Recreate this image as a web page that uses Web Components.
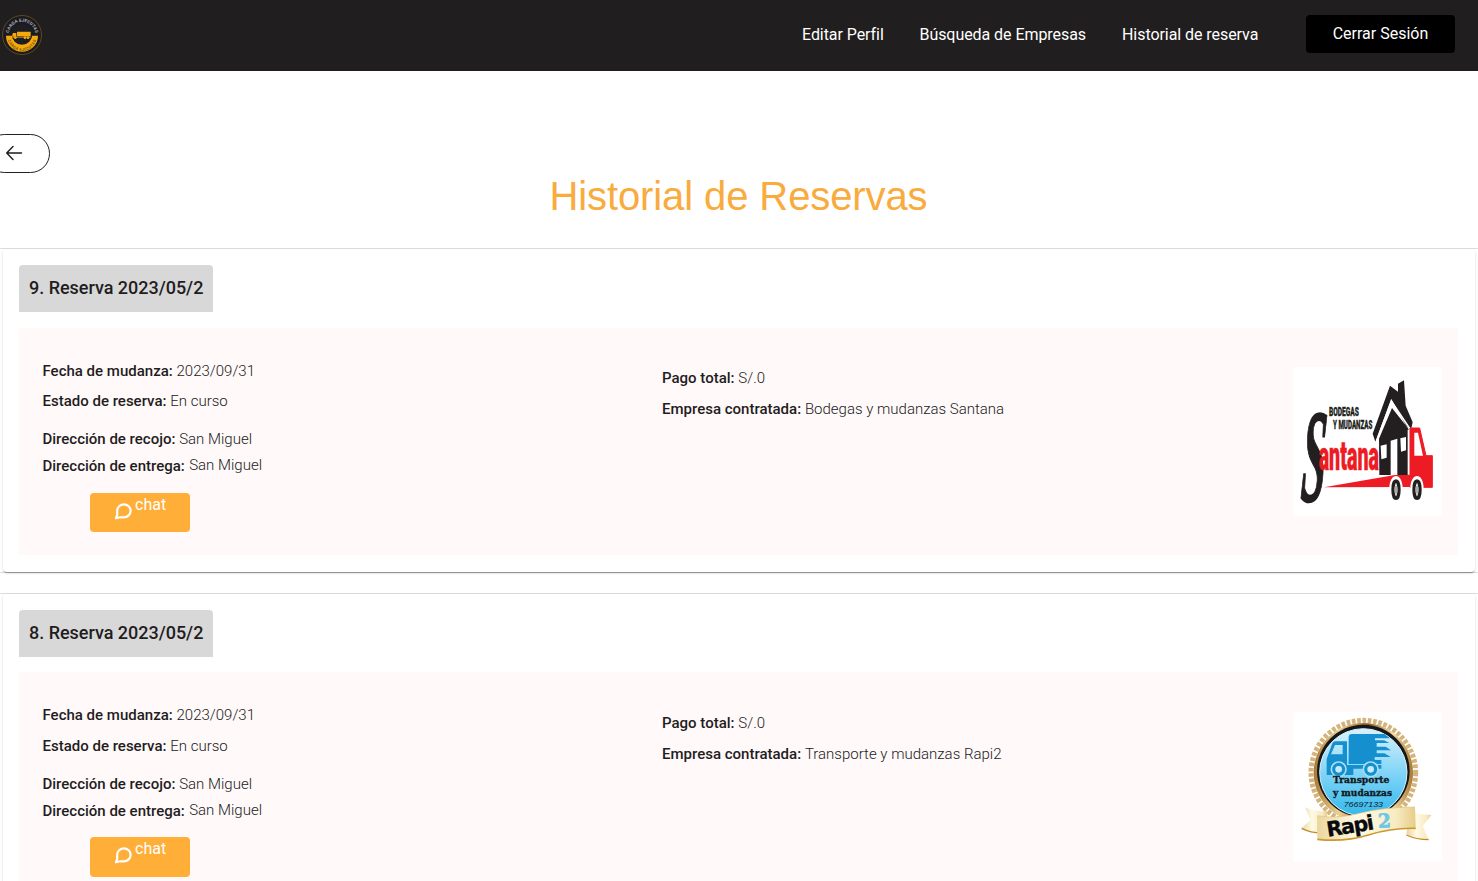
<!DOCTYPE html>
<html lang="es">
<head>
<meta charset="utf-8">
<title>Historial de Reservas</title>
<style>
html,body{margin:0;height:881px;overflow:hidden;background:#fff;font-family:Roboto,sans-serif;color:#212121}
</style>
</head>
<body>
<reservas-page></reservas-page>
<script>
function define(name, html){
  customElements.define(name, class extends HTMLElement{
    constructor(){super();this.attachShadow({mode:'open'}).innerHTML=html;}
  });
}

define('brand-logo', `
<style>:host{display:block;width:40px;height:40px}svg{display:block}</style>
<svg width="40" height="40" viewBox="0 0 120 120">
  <defs><path id="t" d="M20 60a40 40 0 0 1 80 0"/><path id="b" d="M16 64a44 44 0 0 0 88 0"/></defs>
  <circle cx="60" cy="60" r="58.5" fill="#1b1b20" stroke="#80601d" stroke-width="2"/>
  <path d="M12 62a48 48 0 0 0 96 0z" fill="#f6a90c"/>
  <circle cx="60" cy="58" r="31" fill="#1c1d25"/>
  <path d="M45 50h41v14H45zM33 54h10v11H31v-7z" fill="#f6a90c"/><path d="M31 65h55v3H31z" fill="#d9940c"/>
  <circle cx="40" cy="68" r="4" fill="#f6a90c"/><circle cx="69" cy="68" r="4" fill="#f6a90c"/><circle cx="78" cy="68" r="4" fill="#f6a90c"/>
  <text font-family="Roboto" font-weight="700" font-size="13" fill="#b4b4be"><textPath href="#t" startOffset="6" textLength="114">CARGA EJECUTAS</textPath></text>
  <text font-family="Roboto" font-weight="700" font-size="12" fill="#7a570c"><textPath href="#b" startOffset="12" textLength="114">CARGA EJECUTAS</textPath></text>
</svg>`);

define('nav-link', `
<style>:host{display:block;font-size:16px;line-height:20px;letter-spacing:-.06px;color:#fff;white-space:nowrap;width:var(--w)}</style><slot></slot>`);

define('top-bar', `
<style>
:host{display:flex;box-sizing:border-box;height:71px;background:#201e1e;align-items:flex-start;padding:15px 23px 0 2px}
nav{display:flex;gap:36px;margin-left:auto;padding-top:10px}
button{font:400 16px/20px Roboto,sans-serif;color:#fff;background:#000;border:0;border-radius:4px;width:149px;height:38px;margin-left:47px;padding:0 0 1px}
</style>
<brand-logo></brand-logo>
<nav><nav-link style="--w:81.5px">Editar Perfil</nav-link><nav-link style="--w:166.5px">Búsqueda de Empresas</nav-link><nav-link style="--w:137px">Historial de reserva</nav-link></nav>
<button>Cerrar Sesión</button>`);

define('back-button', `
<style>:host{display:block;height:39px;overflow:hidden}
button{display:flex;align-items:center;box-sizing:border-box;width:65px;height:39px;margin-left:-15px;border:1px solid #212121;border-radius:20px;background:#fff;padding:0 0 2px 19px}
svg{display:block}</style>
<button aria-label="Volver"><svg width="18" height="16" viewBox="0 0 18 16" fill="none" stroke="#1c1c1c" stroke-width="1.4" stroke-linecap="round" stroke-linejoin="round"><path d="M16.5 8H1.7M8 1.6L1.7 8L8 14.4"/></svg></button>`);

define('data-field', `
<style>
:host{display:flex;gap:3.8px;height:20px;font-size:15px;line-height:20px;white-space:nowrap}
b{font-weight:500;color:#1f1d1e}span{font-weight:300;color:#212121;margin:var(--shift,0)}
</style>
<b><slot name="label"></slot></b><span><slot></slot></span>`);

define('chat-button', `
<style>:host{display:block}
button{display:flex;align-items:flex-start;box-sizing:border-box;width:100px;height:var(--h,39px);border:0;border-radius:4px;background:#ffae38;color:#fff;padding:2px 0 0 24px;font:400 16px/20px Roboto,sans-serif}
svg{display:block;margin:7px 3px 0 0}</style>
<button><svg width="18" height="18" viewBox="0 0 18 18" fill="none" stroke="#fff" stroke-width="2.2" stroke-linejoin="round"><path d="M2 16.3L3.2 12.6V8.8A6.7 6.5 0 1 1 9.9 15.3H6.2z"/></svg><slot></slot></button>`);

define('santana-logo', `
<style>:host{display:block;width:150px;height:150px}svg{display:block;overflow:visible}</style>
<svg width="150" height="150" viewBox="22 22 450 450">
  <rect x="24" y="22" width="448" height="448" fill="#fff"/>
  <path d="M118 383L335 345H378V382z" fill="#ed1c24"/>
  <path d="M283 237L322 145L372 208V346H284z" fill="#231f20"/>
  <path d="M264 222L316 78L340 96V72L358 62L363 138L384 188L379 210L364 198L320 118L272 246z" fill="#231f20"/>
  <path d="M275 246L320 124L376 208" fill="none" stroke="#fff" stroke-width="5"/>
  <path d="M288 258L306 254V294L290 299zM318 243L338 237V346H318zM347 236L364 232V272L349 276z" fill="#fff"/>
  <path d="M376 205H405L424 288H443V383H376z" fill="#ed1c24" stroke="#ed1c24" stroke-width="3"/>
  <path d="M389 219H400L415 288H389z" fill="#fff"/><path d="M371 210V345" stroke="#fff" stroke-width="4"/>
  <path d="M314 388c0-52 40-52 40 0M377 388c0-52 40-52 40 0" fill="#fff"/>
  <g fill="#fff" stroke="#231f20" stroke-width="10"><ellipse cx="334" cy="390" rx="9" ry="26"/><ellipse cx="397" cy="390" rx="9" ry="26"/></g>
  <ellipse cx="334" cy="390" rx="5" ry="12" fill="#aaa"/><ellipse cx="397" cy="390" rx="5" ry="12" fill="#aaa"/>
  <text transform="translate(46 424) skewX(-3) scale(.33 1)" font-family="Liberation Serif" font-style="italic" font-weight="700" font-size="398" fill="#231f20" stroke="#231f20" stroke-width="6">S</text>
  <g font-family="Roboto" font-weight="900" fill="#231f20" stroke="#231f20" stroke-width="1">
    <text x="133" y="168" font-size="40" textLength="90" lengthAdjust="spacingAndGlyphs">BODEGAS</text>
    <text x="145" y="209" font-size="41" textLength="118" lengthAdjust="spacingAndGlyphs">Y MUDANZAS</text>
  </g>
  <text x="102" y="332" font-family="Roboto" font-weight="900" font-size="124" fill="#ed1c24" stroke="#ed1c24" stroke-width="1.5" textLength="181" lengthAdjust="spacingAndGlyphs">antana</text>
</svg>`);

define('rapi-logo', `
<style>:host{display:block;width:150px;height:150px}svg{display:block}</style>
<svg width="150" height="150" viewBox="22 22 450 450">
  <defs>
    <linearGradient id="sky" x2="0" y2="1"><stop stop-color="#d8f2fd"/><stop offset=".45" stop-color="#8bd8f8"/><stop offset="1" stop-color="#32b8ed"/></linearGradient>
    <linearGradient id="gold"><stop stop-color="#a97833"/><stop offset=".25" stop-color="#ecd190"/><stop offset=".55" stop-color="#8f5c20"/><stop offset=".8" stop-color="#f2d99b"/><stop offset="1" stop-color="#a97833"/></linearGradient>
    <linearGradient id="rib"><stop stop-color="#ead59c"/><stop offset=".4" stop-color="#fffae4"/><stop offset=".8" stop-color="#f7ebc3"/><stop offset="1" stop-color="#e7cd86"/></linearGradient>
  </defs>
  <rect x="24" y="22" width="448" height="448" fill="#fff"/>
  <circle cx="236" cy="204" r="157" fill="none" stroke="#d3b47c" stroke-width="15" stroke-dasharray="11 5"/>
  <circle cx="236" cy="204" r="149" fill="url(#gold)"/>
  <circle cx="236" cy="199" r="139" fill="#14171b"/>
  <circle cx="236" cy="203" r="131" fill="url(#sky)" stroke="#dceff7" stroke-width="3"/>
  <g fill="#168fce">
    <path d="M192 97q0-9 10-9H299L316 101H271V107H298L314 115H276V126H303L319 137H276V146H299L318 157H270V166H290V178H192z"/>
    <path fill-rule="evenodd" d="M126 211V163L143 116q3-6 9-6H187V181H290V192H206V211zM139 149H174V121H151z"/>
    <circle cx="162" cy="194" r="22" stroke="#a5e0f8" stroke-width="5"/><circle cx="258" cy="194" r="22" stroke="#a5e0f8" stroke-width="5"/>
  </g>
  <circle cx="162" cy="194" r="10" fill="#c6ecfb"/><circle cx="258" cy="194" r="10" fill="#c6ecfb"/>
  <g font-family="DejaVu Serif" font-weight="700" fill="#101820" stroke="#101820" stroke-width="1">
    <text x="145" y="236" font-size="28" textLength="169" lengthAdjust="spacingAndGlyphs">Transporte</text>
    <text x="145" y="275" font-size="28" textLength="177" lengthAdjust="spacingAndGlyphs">y mudanzas</text>
  </g>
  <text x="177" y="307" font-family="Liberation Sans" font-style="italic" font-size="24" fill="#101820" textLength="118" lengthAdjust="spacingAndGlyphs">76697133</text>
  <path d="M61 308Q88 322 128 319L126 386Q88 388 51 371L77 346z" fill="url(#rib)"/>
  <path d="M375 322Q407 331 440 331L414 364L432 405Q396 404 365 388z" fill="url(#rib)"/>
  <path d="M51 371Q84 388 126 384M365 391Q396 405 432 405" fill="none" stroke="#c08b25" stroke-width="4"/>
  <path d="M97 333Q156 344 224 326T391 307L393 371Q322 370 251 391T98 404z" fill="url(#rib)"/>
  <path d="M98 404Q180 413 251 391T393 371" fill="none" stroke="#cc982e" stroke-width="5"/>
  <path d="M97 333Q156 344 224 326T391 307" fill="none" stroke="#dfc382" stroke-width="2"/>
  <text transform="translate(129 396) rotate(-9)" font-family="DejaVu Sans" font-weight="700" font-size="62" fill="#08090b" stroke="#08090b" stroke-width="1" textLength="143" lengthAdjust="spacing">Rapi</text>
  <text transform="translate(281 369) rotate(-3)" font-family="DejaVu Serif" font-weight="700" font-size="57" fill="#6cc7e8" stroke="#6cc7e8" stroke-width="2" textLength="39" lengthAdjust="spacingAndGlyphs">2</text>
</svg>`);

define('reserva-card', `
<style>
:host{display:block;box-sizing:border-box;height:325px;margin-bottom:20px;border-top:1px solid #dedede;border-bottom:1px solid #dedede;padding:0 3px}
article{box-sizing:border-box;height:323px;border-radius:4px;padding:16px;box-shadow:0 2px 1px -1px rgba(0,0,0,.2),0 1px 1px rgba(0,0,0,.14),0 1px 3px rgba(0,0,0,.12)}
h2{margin:0 0 var(--gap,16px);box-sizing:border-box;width:194px;height:47px;background:#d8d8d8;border-radius:4px 4px 0 0;padding:11px 10px;font:500 18px/24px Roboto,sans-serif;letter-spacing:-.02px;color:#1f1d1e;white-space:nowrap}
section{display:grid;grid-template-columns:619.5px 1fr 150px;box-sizing:border-box;width:1439px;height:227px;background:#fff9f9;padding:33px 16px 0 23.5px}
.b{padding-top:var(--b,7px)}.logo{padding-top:var(--l,6px)}
.b data-field{margin-bottom:11px}
.a data-field:nth-of-type(1){margin-bottom:var(--f,10px)}
.a data-field:nth-of-type(2){margin-bottom:18px}
.a data-field:nth-of-type(3){margin-bottom:7px}
.a data-field:nth-of-type(4){margin-bottom:var(--c,17px);--shift:-1px 0 0 .6px}
chat-button{margin-left:47.5px}
</style>
<article>
<h2><slot name="title"></slot></h2>
<section>
<div class="a">
<data-field><span slot="label">Fecha de mudanza:</span>2023/09/31</data-field>
<data-field><span slot="label">Estado de reserva:</span>En curso</data-field>
<data-field><span slot="label">Dirección de recojo:</span>San Miguel</data-field>
<data-field><span slot="label">Dirección de entrega:</span>San Miguel</data-field>
<chat-button>chat</chat-button>
</div>
<div class="b">
<data-field><span slot="label">Pago total:</span>S/.0</data-field>
<data-field><span slot="label">Empresa contratada:</span><slot name="company"></slot></data-field>
</div>
<div class="logo"><slot name="logo"></slot></div>
</section>
</article>`);

define('reservas-page', `
<style>
:host{display:block;height:881px;overflow:hidden}
back-button{margin-top:63px}
h1{margin:0;height:75px;text-align:center;font:400 40px/46px "Liberation Sans",Arial,sans-serif;letter-spacing:-.1px;padding-right:1px;color:#f9ab3e}
.second{--gap:15px;--f:11px;--b:8px;--l:7px;--c:16px;--h:40px}
</style>
<top-bar></top-bar>
<back-button></back-button>
<h1>Historial de Reservas</h1>
<reserva-card><span slot="title">9. Reserva 2023/05/2</span><span slot="company">Bodegas y mudanzas Santana</span><santana-logo slot="logo"></santana-logo></reserva-card>
<reserva-card class="second"><span slot="title">8. Reserva 2023/05/2</span><span slot="company">Transporte y mudanzas Rapi2</span><rapi-logo slot="logo"></rapi-logo></reserva-card>`);
</script>
</body>
</html>
